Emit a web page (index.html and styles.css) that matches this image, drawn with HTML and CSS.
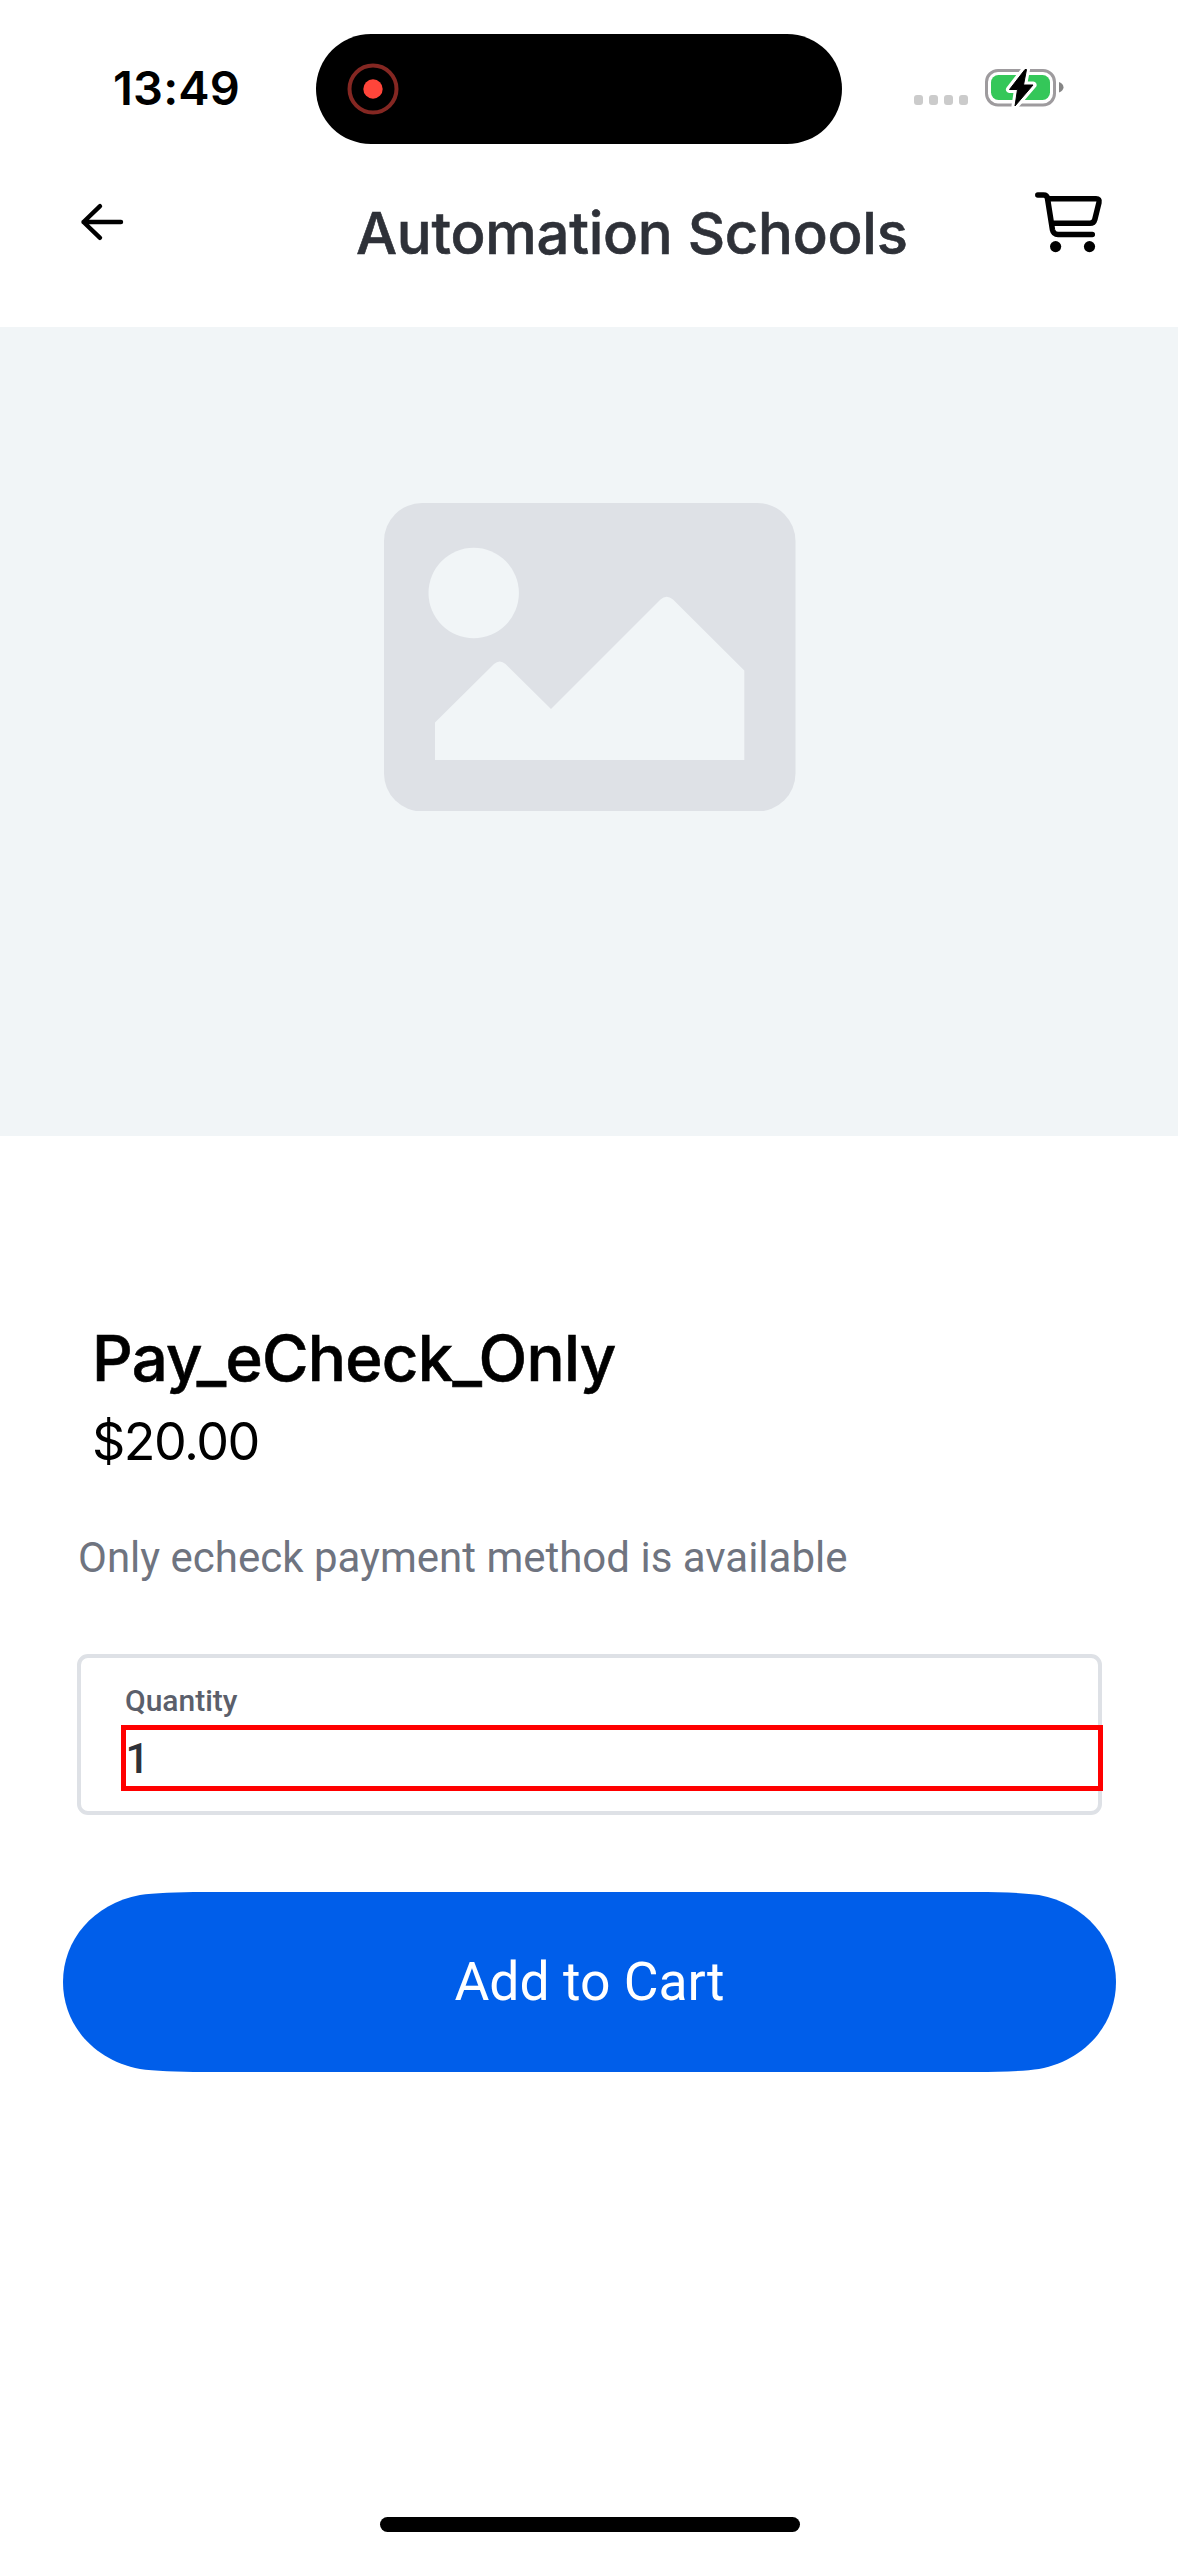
FILE: index.html
```html
<!DOCTYPE html>
<html lang="en">
<head>
<meta charset="utf-8">
<title>Automation Schools</title>
<link rel="stylesheet" href="styles.css">
</head>
<body>
<div class="screen">
  <div class="status">
    <span class="time">13:49</span>
    <div class="island">
      <svg class="record" viewBox="0 0 52 52"><circle cx="26" cy="26" r="23.5" fill="none" stroke="#842722" stroke-width="4"/><circle cx="26" cy="26" r="9.7" fill="#ff453a"/></svg>
    </div>
    <svg class="indicators" viewBox="914 66 152 44">
      <g fill="#cbcbcb"><rect x="914" y="95" width="9" height="10" rx="3"/><rect x="929" y="95" width="9" height="10" rx="3"/><rect x="944" y="95" width="9" height="10" rx="3"/><rect x="959" y="95" width="9" height="10" rx="3"/></g>
      <rect x="986.5" y="70.5" width="68" height="34.5" rx="11.5" fill="none" stroke="#9e9b9e" stroke-width="3"/>
      <rect x="991" y="75" width="59" height="25" rx="7.5" fill="#34c759"/>
      <path d="M1059 82Q1063.5 84 1063.5 87.3T1059 92.5Z" fill="#858585"/>
      <path d="M1025 69.500L1009.500 89.500H1017.500L1015 106L1033 85H1023.500L1026.500 69.500Z" fill="#000" stroke="#fff" stroke-width="7" stroke-linejoin="round"/>
      <path d="M1025 69.500L1009.500 89.500H1017.500L1015 106L1033 85H1023.500L1026.500 69.500Z" fill="#000" stroke="#000" stroke-width="1" stroke-linejoin="round"/>
    </svg>
  </div>
  <header class="header">
    <svg class="back" viewBox="80 202 46 40"><path d="M121 222H83.500M100 206.200L83.500 222L100 237.800" fill="none" stroke="#000" stroke-width="4.400" stroke-linecap="round" stroke-linejoin="round"/></svg>
    <h1 class="title">Automation Schools</h1>
    <svg class="cart" viewBox="0 0 100 100" fill="none" stroke="#000" stroke-width="5.500" stroke-linecap="round" stroke-linejoin="round"><path d="M17.800 25H23.500Q27 25 27.500 28.500L32.500 60Q33.500 64.500 38 64.500H72.300M27.800 28.800H76Q80 28.800 79 32.500L74.800 49.500Q73.800 53.300 70 53.300H32"/><g fill="#000" stroke="none"><circle cx="35.600" cy="76.600" r="5.600"/><circle cx="69.500" cy="76.600" r="5.600"/></g></svg>
  </header>
  <div class="photo">
    <svg class="placeholder" viewBox="384 502.500 411.500 308.500">
      <rect x="384" y="502.500" width="411.500" height="308.500" rx="38" fill="#dee1e6"/>
      <g fill="#f1f5f7"><circle cx="473.700" cy="592.500" r="45.200"/><path d="M435 722L494 663.500Q499.700 658.500 505.500 663.500L551 708.500L660.500 599Q666.500 593.500 673 599L744.300 670V759.500H435Z"/></g>
    </svg>
  </div>
  <main class="details">
    <h2 class="name">Pay_eCheck_Only</h2>
    <p class="price">$20.00</p>
    <p class="description">Only echeck payment method is available</p>
    <div class="field">
      <label class="label" for="qty">Quantity</label>
      <div class="value" id="qty">1</div>
    </div>
    <div class="add">
      <svg class="add-shape" viewBox="0 0 1053 180"><path d="M140 0H913C938 0 963 1 976 3C1023 12 1053 48 1053 90S1023 168 976 177C963 179 938 180 913 180H140C115 180 90 179 77 177C30 168 0 132 0 90S30 12 77 3C90 1 115 0 140 0Z" fill="#005eea"/></svg>
      <span class="add-label">Add to Cart</span>
    </div>
  </main>
  <div class="home"></div>
</div>
</body>
</html>
```
FILE: styles.css
```css
* { box-sizing: border-box; }
body { margin: 0; background: #fff; }
h1, h2, p { margin: 0; font-weight: normal; }
svg { display: block; flex: none; }
.screen {
  width: 1178px;
  height: 2556px;
  display: flex;
  flex-direction: column;
  background: #fff;
  font-family: Roboto, sans-serif;
  white-space: nowrap;
  overflow: hidden;
}
.status {
  height: 144px;
  padding: 34px 112px 0 113px;
  display: flex;
  flex: none;
}
.time {
  width: 203px;
  padding-top: 26px;
  font: 560 47px/56px Inter, sans-serif;
  letter-spacing: 0.2px;
}
.island {
  width: 526px;
  height: 110px;
  border-radius: 55px;
  background: #000;
  padding: 29px 0 0 31px;
}
.record { width: 52px; height: 52px; }
.indicators { width: 152px; height: 44px; margin: 32px 0 0 72px; }
.header {
  height: 183px;
  padding-left: 80px;
  display: flex;
  flex: none;
}
.back { width: 46px; height: 40px; margin-top: 58px; }
.title {
  width: 664px;
  margin: 54px 0 0 230px;
  color: #2e3138;
  font: 500 58px/70px Inter, sans-serif;
  letter-spacing: -0.25px;
  -webkit-text-stroke: 0.6px #2e3138;
}
.cart { width: 100px; height: 100px; margin-top: 26px; }
.photo {
  height: 809px;
  flex: none;
  background: #f1f5f7;
  padding: 175.500px 0 0 384px;
}
.placeholder { width: 411.500px; height: 308.500px; }
.details {
  height: 1381px;
  padding: 184px 62px 0 63px;
  display: flex;
  flex-direction: column;
  flex: none;
}
.name {
  margin-left: 29px;
  font: 500 63.500px/76px Inter, sans-serif;
  letter-spacing: -0.750px;
  -webkit-text-stroke: 0.6px #000;
}
.price {
  margin: 15px 0 0 29px;
  font: 400 52px/62px Inter, sans-serif;
  letter-spacing: -1.500px;
}
.description {
  margin: 60px 0 0 15px;
  color: #6f7480;
  font-size: 42px;
  line-height: 50px;
}
.field {
  position: relative;
  width: 1025px;
  height: 161px;
  margin: 71px 0 0 14px;
  padding: 25px 0 0 44px;
  border: 4px solid #dee1e6;
  border-radius: 11px;
}
.label {
  display: block;
  color: #5b5f6b;
  font-weight: 500;
  font-size: 30px;
  line-height: 36px;
}
.value {
  position: absolute;
  left: 39.500px;
  top: 67px;
  width: 982px;
  height: 66px;
  border: 5px solid #f00;
  color: #2e3138;
  font-weight: 500;
  font-size: 42px;
  line-height: 57px;
}
.add {
  width: 1053px;
  height: 180px;
  margin-top: 77px;
  display: grid;
  place-items: center;
}
.add > * { grid-area: 1 / 1; }
.add-shape { width: 1053px; height: 180px; }
.add-label { color: #fff; font-size: 53.500px; line-height: 64px; }
.home {
  width: 420px;
  height: 15px;
  margin-left: 380px;
  border-radius: 8px;
  background: #000;
  flex: none;
}
```
